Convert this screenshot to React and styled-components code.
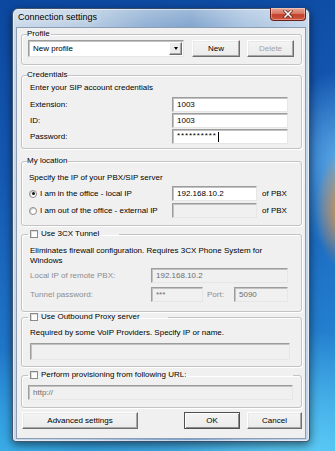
import React from 'react';
import styled, { createGlobalStyle } from 'styled-components';

const Global = createGlobalStyle`
  html, body { margin: 0; padding: 0; }
  body {
    width: 335px; height: 451px; overflow: hidden;
    font-family: "Liberation Sans", Arial, sans-serif;
    -webkit-font-smoothing: antialiased;
  }
  * { box-sizing: border-box; }
`;

const Desktop = styled.div`
  width: 335px;
  height: 451px;
  padding: 8px 0 0 12px;
  overflow: hidden;
  background:
    radial-gradient(ellipse 30px 60px at 345px 210px, rgba(255,150,50,0.95), rgba(255,150,50,0) 100%),
    radial-gradient(ellipse 60px 90px at 340px 160px, rgba(120,200,250,0.7), rgba(120,200,250,0) 100%),
    radial-gradient(ellipse 220px 140px at 300px 470px, #62d2fa, rgba(98,210,250,0) 100%),
    radial-gradient(ellipse 160px 120px at 20px 470px, #3db4ec, rgba(61,180,236,0) 100%),
    linear-gradient(170deg, #0c48a0 0%, #1559b3 35%, #1f74c8 65%, #2c96dc 100%);
`;

const Window = styled.div`
  width: 298px;
  height: 434px;
  display: flex;
  flex-direction: column;
  padding: 0 3px 2px 3px;
  border: 1px solid rgba(20, 40, 70, 0.75);
  border-radius: 6px 6px 4px 4px;
  background:
    linear-gradient(180deg, rgba(255,255,255,0.25) 0%, rgba(255,255,255,0) 20px),
    linear-gradient(90deg, #c9d9ea 0%, #b6cbe2 25%, #8eaed3 45%, #7fa3cd 60%, #a9c3e0 78%, #c6d7ea 100%);
  box-shadow: 0 3px 10px rgba(0, 0, 0, 0.55), inset 0 0 0 1px rgba(255, 255, 255, 0.55);
`;

const TitleBar = styled.div`
  height: 18px;
  display: flex;
  justify-content: space-between;
  align-items: flex-start;
`;

const Title = styled.div`
  padding-left: 2px;
  font-size: 9px;
  line-height: 17px;
  color: #000;
  text-shadow: 0 0 6px rgba(255, 255, 255, 0.9);
`;

const CloseButton = styled.div`
  width: 36px;
  height: 13px;
  margin-top: -1px;
  display: flex;
  align-items: center;
  justify-content: center;
  border: 1px solid #6b1f16;
  border-top: none;
  border-radius: 0 0 4px 4px;
  background: linear-gradient(180deg, #e9a593 0%, #d87a66 45%, #c2412c 55%, #d1573f 100%);
  box-shadow: inset 0 0 0 1px rgba(255, 255, 255, 0.35);
`;

const Client = styled.div`
  flex: 1;
  display: flex;
  flex-direction: column;
  background: #f0f0f0;
  border: 1px solid #8d9db3;
`;

const Group = styled.fieldset`
  margin: ${(p) => p.$mt}px 3px 0 4px;
  padding: 0;
  min-width: 0;
  border: 1px solid #c3c3c3;
  border-radius: 3px;
  box-shadow: inset 1px 1px 0 #fff, 1px 1px 0 #fff;
`;

const Legend = styled.legend`
  margin-left: ${(p) => p.$ml ?? 5}px;
  width: ${(p) => (p.$w ? `${p.$w}px` : 'auto')};
  height: 10px;
  padding: 0 ${(p) => p.$pr ?? 1}px 0 ${(p) => p.$pl ?? 0}px;
  display: flex;
  align-items: center;
  gap: 3px;
  font-size: 8px;
  line-height: 10px;
  color: #000;
`;

const Body = styled.div`
  padding: ${(p) => p.$pad};
  display: flex;
  flex-direction: column;
  gap: ${(p) => p.$gap ?? 0}px;
`;

const Text = styled.div`
  font-size: 8px;
  line-height: 10px;
  color: ${(p) => (p.$disabled ? '#8d8d8d' : '#000')};
  white-space: nowrap;
`;

const FormGrid = styled.div`
  display: grid;
  grid-template-columns: ${(p) => p.$cols};
  row-gap: ${(p) => p.$rowGap}px;
  align-items: center;
  margin-top: ${(p) => p.$mt ?? 0}px;
`;

const Field = styled.div`
  width: ${(p) => (p.$w ? `${p.$w}px` : '100%')};
  height: ${(p) => p.$h}px;
  padding-left: 4px;
  display: flex;
  align-items: center;
  font-size: 8px;
  color: ${(p) => (p.$disabled ? '#6d6d6d' : '#000')};
  background: ${(p) => (p.$disabled ? '#f0f0f0' : '#fff')};
  border: 1px solid;
  border-color: #9c9c9c #e6e6e6 #e6e6e6 #9c9c9c;
  box-shadow: inset 1px 1px 0 #c2c2c2;
  white-space: nowrap;
  overflow: hidden;
`;

const Stars = styled.span`
  letter-spacing: 0.85px;
  font-size: 8px;
  line-height: 8px;
  align-self: flex-start;
  margin-top: 2px;
`;

const Caret = styled.span`
  width: 1px;
  height: 10px;
  background: #000;
  margin-left: 1px;
`;

const Button = styled.div`
  width: ${(p) => p.$w}px;
  height: 17px;
  display: flex;
  align-items: center;
  justify-content: center;
  font-size: 8px;
  color: ${(p) => (p.$disabled ? '#a3a3a3' : '#000')};
  background: linear-gradient(180deg, #f4f4f4 0%, #ebebeb 100%);
  border: 1px solid;
  border-color: ${(p) => (p.$default ? '#505050' : '#fff #6e6e6e #6e6e6e #fff')};
  box-shadow: ${(p) =>
    p.$default
      ? 'inset 1px 1px 0 #fff, inset -1px -1px 0 #8a8a8a'
      : 'inset -1px -1px 0 #a8a8a8, inset 1px 1px 0 #e8e8e8'};
`;

const ProfileRow = styled.div`
  display: flex;
  align-items: center;
  gap: 8px;
`;

const ButtonPair = styled.div`
  display: flex;
  gap: 7px;
`;

const Combo = styled.div`
  width: 156px;
  height: 17px;
  display: flex;
  align-items: center;
  justify-content: space-between;
  padding: 0 1px 0 4px;
  font-size: 8px;
  background: #fff;
  border: 1px solid;
  border-color: #9c9c9c #e6e6e6 #e6e6e6 #9c9c9c;
  box-shadow: inset 1px 1px 0 #c2c2c2;
`;

const ComboArrow = styled.div`
  width: 13px;
  height: 13px;
  display: flex;
  align-items: center;
  justify-content: center;
  background: #ececec;
  border: 1px solid;
  border-color: #fff #6e6e6e #6e6e6e #fff;
  box-shadow: inset -1px -1px 0 #a8a8a8;
`;

const Tri = styled.div`
  width: 0;
  height: 0;
  border-left: 2.5px solid transparent;
  border-right: 2.5px solid transparent;
  border-top: 3px solid #000;
`;

const OptionLabel = styled.div`
  display: flex;
  align-items: center;
  gap: 3px;
  font-size: 8px;
  color: #000;
`;

const Radio = styled.div`
  width: 8px;
  height: 8px;
  border-radius: 50%;
  border: 1px solid #8a8a8a;
  background: #fff;
  display: flex;
  align-items: center;
  justify-content: center;
  box-shadow: inset 1px 1px 1px #cfcfcf;
  &::after {
    content: '';
    width: 3px;
    height: 3px;
    border-radius: 50%;
    background: ${(p) => (p.$checked ? '#111' : 'transparent')};
  }
`;

const Check = styled.div`
  width: 8px;
  height: 8px;
  flex: none;
  border: 1px solid #8a8a8a;
  background: #fff;
  box-shadow: inset 1px 1px 0 #dcdcdc;
`;

const OfPbx = styled.div`
  margin-left: 5px;
  font-size: 8px;
  color: #000;
`;

const PortLabel = styled.div`
  display: flex;
  align-items: center;
  justify-content: space-between;
`;

const PortText = styled.span`
  font-size: 8px;
  color: #8d8d8d;
  margin-left: 4px;
`;

const Footer = styled.div`
  margin: 4px 3px 0 5px;
  display: flex;
  justify-content: space-between;
`;

export default function App() {
  return (
    <>
      <Global />
      <Desktop>
        <Window>
          <TitleBar>
            <Title>Connection settings</Title>
            <CloseButton>
              <svg width="10" height="8" viewBox="0 0 10 8">
                <path d="M2 1 L8 7 M8 1 L2 7" stroke="#5a1a12" strokeWidth="3" strokeLinecap="square" />
                <path d="M2 1 L8 7 M8 1 L2 7" stroke="#fff" strokeWidth="1.6" strokeLinecap="square" />
              </svg>
            </CloseButton>
          </TitleBar>
          <Client>
            <Group $mt={1}>
              <Legend>Profile</Legend>
              <Body $pad="1px 7px 7px 6px">
                <ProfileRow>
                  <Combo>
                    New profile
                    <ComboArrow>
                      <Tri />
                    </ComboArrow>
                  </Combo>
                  <ButtonPair>
                    <Button $w={48}>New</Button>
                    <Button $w={47} $disabled>Delete</Button>
                  </ButtonPair>
                </ProfileRow>
              </Body>
            </Group>

            <Group $mt={5}>
              <Legend>Credentials</Legend>
              <Body $pad="3px 12px 4px 8px">
                <Text>Enter your SIP account credentials</Text>
                <FormGrid $cols="142px 116px" $rowGap={1} $mt={4}>
                  <Text>Extension:</Text>
                  <Field $h={15}>1003</Field>
                  <Text>ID:</Text>
                  <Field $h={15}>1003</Field>
                  <Text>Password:</Text>
                  <Field $h={15}>
                    <Stars>**********</Stars>
                    <Caret />
                  </Field>
                </FormGrid>
              </Body>
            </Group>

            <Group $mt={7}>
              <Legend>My location</Legend>
              <Body $pad="7px 10px 7px 7px">
                <Text>Specify the IP of your PBX/SIP server</Text>
                <FormGrid $cols="143px 85px auto" $rowGap={2} $mt={3}>
                  <OptionLabel>
                    <Radio $checked />
                    I am in the office - local IP
                  </OptionLabel>
                  <Field $h={15}>192.168.10.2</Field>
                  <OfPbx>of PBX</OfPbx>
                  <OptionLabel>
                    <Radio />
                    I am out of the office - external IP
                  </OptionLabel>
                  <Field $h={15} $disabled />
                  <OfPbx>of PBX</OfPbx>
                </FormGrid>
              </Body>
            </Group>

            <Group $mt={3}>
              <Legend $ml={6} $pl={2} $w={91}>
                <Check />
                Use 3CX Tunnel
              </Legend>
              <Body $pad="7px 12px 9px 8px">
                <Text>
                  Eliminates firewall configuration. Requires 3CX Phone System for
                  <br />
                  Windows
                </Text>
                <FormGrid $cols="121px 52px 31px 54px" $rowGap={4} $mt={2}>
                  <Text $disabled>Local IP of remote PBX:</Text>
                  <Field $h={15} $disabled style={{ gridColumn: '2 / 5' }}>192.168.10.2</Field>
                  <Text $disabled>Tunnel password:</Text>
                  <Field $h={15} $disabled>***</Field>
                  <PortLabel>
                    <PortText>Port:</PortText>
                  </PortLabel>
                  <Field $h={15} $disabled>5090</Field>
                </FormGrid>
              </Body>
            </Group>

            <Group $mt={0}>
              <Legend $ml={6} $pl={2} $w={140}>
                <Check />
                Use Outbound Proxy server
              </Legend>
              <Body $pad="6px 11px 6px 8px" $gap={5}>
                <Text>Required by some VoIP Providers. Specify IP or name.</Text>
                <Field $h={17} $disabled />
              </Body>
            </Group>

            <Group $mt={3}>
              <Legend $ml={6} $pl={2} $w={265}>
                <Check />
                Perform provisioning from following URL:
              </Legend>
              <Body $pad="5px 8px 7px 6px">
                <Field $h={15} $disabled>http://</Field>
              </Body>
            </Group>

            <Footer>
              <Button $w={116}>Advanced settings</Button>
              <ButtonPair>
                <Button $w={56} $default>OK</Button>
                <Button $w={55}>Cancel</Button>
              </ButtonPair>
            </Footer>
          </Client>
        </Window>
      </Desktop>
    </>
  );
}
